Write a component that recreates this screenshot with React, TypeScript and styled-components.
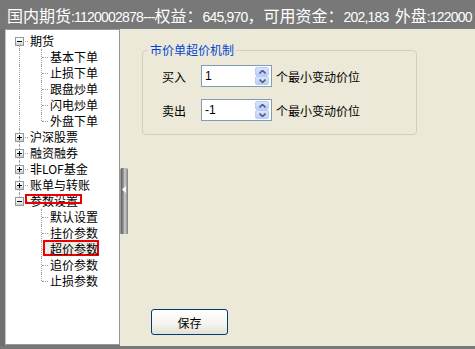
import React from 'react';
import styled, { createGlobalStyle, css } from 'styled-components';

const GlobalStyle = createGlobalStyle`
  html, body {
    margin: 0;
    padding: 0;
  }
  body {
    background: #ece9d8;
    font-family: "Noto Sans CJK SC", "Liberation Sans", sans-serif;
  }
`;

const Window = styled.div`
  width: 475px;
  height: 349px;
  display: flex;
  flex-direction: column;
  overflow: hidden;
  background: #787878;
`;

const TitleBar = styled.div`
  flex: none;
  height: 29px;
  box-sizing: border-box;
  padding: 1px 0 0 7px;
  background: #787878;
  color: #fff;
  font-size: 16px;
  line-height: 28px;
  white-space: nowrap;
  overflow: hidden;
`;

const Num = styled.span`
  font-family: "Liberation Sans", sans-serif;
  font-size: 14px;
  letter-spacing: -0.8px;
`;

const Main = styled.div`
  flex: 1;
  min-height: 0;
  display: flex;
`;

const BottomEdge = styled.div`
  flex: none;
  height: 3px;
  background: #787878;
`;

const LeftEdge = styled.div`
  flex: none;
  width: 5px;
  background: #6f6f6f;
`;

const TreePanel = styled.div`
  flex: none;
  width: 115px;
  box-sizing: border-box;
  margin-bottom: 1px;
  padding-top: 3px;
  background: #fff;
  border: 1px solid #979797;
  border-left-color: #c4c4c4;
`;

const TreeRow = styled.div`
  display: flex;
  align-items: center;
  height: 16px;
`;

const Rail = styled.span<{ $w: number; $x: number; $top?: boolean; $bottom?: boolean; $branch?: boolean }>`
  position: relative;
  flex: none;
  display: flex;
  align-items: center;
  width: ${(p) => p.$w}px;
  height: 16px;

  &::before {
    content: '';
    display: ${(p) => (p.$top || p.$bottom ? 'block' : 'none')};
    position: absolute;
    left: ${(p) => p.$x}px;
    top: ${(p) => (p.$top ? 0 : 8)}px;
    bottom: ${(p) => (p.$bottom ? 0 : 8)}px;
    border-left: 1px dotted #a0a0a0;
  }

  &::after {
    content: '';
    display: ${(p) => (p.$branch ? 'block' : 'none')};
    position: absolute;
    left: ${(p) => p.$x + 1}px;
    right: 2px;
    top: 8px;
    border-top: 1px dotted #a0a0a0;
  }
`;

const Toggle = styled.span<{ $open: boolean }>`
  position: relative;
  z-index: 1;
  width: 9px;
  height: 9px;
  margin-left: 9px;
  box-sizing: border-box;
  border: 1px solid #8c9aa6;
  background: linear-gradient(#ffffff, #f0f0ea 50%, #cfcfc6);

  &::before {
    content: '';
    position: absolute;
    left: 1px;
    top: 3px;
    width: 5px;
    height: 1px;
    background: #000;
  }

  &::after {
    content: '';
    display: ${(p) => (p.$open ? 'none' : 'block')};
    position: absolute;
    left: 3px;
    top: 1px;
    width: 1px;
    height: 5px;
    background: #000;
  }
`;

const NodeLabel = styled.span<{ $mark?: 'outline' | 'selected' }>`
  position: relative;
  z-index: 0;
  font-size: 12px;
  line-height: 16px;
  color: #000;
  white-space: nowrap;

  ${(p) =>
    p.$mark === 'outline' &&
    css`
      &::after {
        content: '';
        position: absolute;
        left: -5px;
        top: 1px;
        width: 57px;
        height: 10px;
        box-sizing: border-box;
        border: 2px solid #ee0000;
      }
    `}

  ${(p) =>
    p.$mark === 'selected' &&
    css`
      &::before {
        content: '';
        position: absolute;
        z-index: -1;
        left: -7px;
        top: -1px;
        width: 56px;
        height: 16px;
        box-sizing: border-box;
        border: 2px solid #ee0000;
        background: #ecebe6;
      }
    `}
`;

const Splitter = styled.div`
  flex: none;
  width: 8px;
  background: #ece9d8;
  display: flex;
  flex-direction: column;
`;

const Grip = styled.div`
  margin-top: 139px;
  height: 66px;
  padding-top: 18px;
  box-sizing: border-box;
  display: flex;
  justify-content: center;
  border-radius: 2px 2px 0 0;
  background: linear-gradient(to right, #e0e0e0 0, #5c5c5c 12%, #9a9a9a 45%, #cfcfcf 60%, #7c7c7c 100%);
`;

const Content = styled.div`
  flex: 1;
  display: flex;
  flex-direction: column;
  align-items: flex-start;
  padding: 13px 0 11px 14px;
  background: #ece9d8;
`;

const GroupBox = styled.fieldset`
  width: 275px;
  box-sizing: border-box;
  min-width: 0;
  margin: 0;
  padding: 0;
  border: 1px solid #d0d0bf;
  border-radius: 4px;
`;

const Legend = styled.legend`
  margin-left: 5px;
  padding: 0 2px;
  font-size: 12px;
  line-height: 16px;
  color: #0046d5;
`;

const FieldRows = styled.div`
  display: flex;
  flex-direction: column;
  gap: 12px;
  padding: 7px 0 13px 19px;
`;

const FieldRow = styled.div`
  display: flex;
  align-items: center;
  height: 22px;
`;

const FieldLabel = styled.span`
  width: 39px;
  font-size: 12px;
  color: #000;
`;

const SpinBox = styled.div`
  width: 71px;
  height: 22px;
  box-sizing: border-box;
  display: flex;
  border: 1px solid #7f9db9;
  background: #fff;
`;

const SpinValue = styled.span`
  flex: 1;
  padding-left: 3px;
  font-family: "Liberation Sans", sans-serif;
  font-size: 12px;
  line-height: 20px;
  color: #000;
`;

const SpinButtons = styled.div`
  width: 14px;
  margin: 1px 2px 1px 0;
  display: flex;
  flex-direction: column;
`;

const SpinButton = styled.span`
  flex: 1;
  display: flex;
  align-items: center;
  justify-content: center;
  border: 1px solid #bccdf5;
  border-radius: 2px;
  background: linear-gradient(#d9e4fd, #bccdf7);
`;

const Unit = styled.span`
  margin-left: 4px;
  font-size: 12px;
  color: #000;
`;

const SaveButton = styled.button`
  margin-top: auto;
  margin-left: 9px;
  width: 77px;
  height: 26px;
  padding: 0;
  border: 1px solid #003c74;
  border-radius: 3px;
  background: linear-gradient(#ffffff, #f4f3ee 60%, #e3e0d6);
  font-family: inherit;
  font-size: 12px;
  color: #000;
`;

const Chevron = ({ up }: { up?: boolean }) => (
  <svg width="7" height="4" viewBox="0 0 7 4">
    <path
      d={up ? 'M0.5 3.5 L3.5 0.5 L6.5 3.5' : 'M0.5 0.5 L3.5 3.5 L6.5 0.5'}
      fill="none"
      stroke="#4d6185"
      strokeWidth="1.6"
    />
  </svg>
);

type Leaf = { label: string; mark?: 'outline' | 'selected' };
type Branch = Leaf & { open?: boolean; children?: Leaf[] };

const tree: Branch[] = [
  {
    label: '期货',
    open: true,
    children: [
      { label: '基本下单' },
      { label: '止损下单' },
      { label: '跟盘炒单' },
      { label: '闪电炒单' },
      { label: '外盘下单' },
    ],
  },
  { label: '沪深股票' },
  { label: '融资融券' },
  { label: '非LOF基金' },
  { label: '账单与转账' },
  {
    label: '参数设置',
    open: true,
    mark: 'outline',
    children: [
      { label: '默认设置' },
      { label: '挂价参数' },
      { label: '超价参数', mark: 'selected' },
      { label: '追价参数' },
      { label: '止损参数' },
    ],
  },
];

const SpinField = ({ label, value }: { label: string; value: string }) => (
  <FieldRow>
    <FieldLabel>{label}</FieldLabel>
    <SpinBox>
      <SpinValue>{value}</SpinValue>
      <SpinButtons>
        <SpinButton>
          <Chevron up />
        </SpinButton>
        <SpinButton>
          <Chevron />
        </SpinButton>
      </SpinButtons>
    </SpinBox>
    <Unit>个最小变动价位</Unit>
  </FieldRow>
);

export default function App() {
  return (
    <Window>
      <GlobalStyle />
      <TitleBar>
        国内期货<Num>:1120002878---</Num>权益：<Num>645,970</Num>，可用资金：
        <Num>202,183 &nbsp;</Num>外盘<Num>:122000</Num>
      </TitleBar>

      <Main>
        <LeftEdge />

        <TreePanel>
          {tree.map((node, i) => {
            const last = i === tree.length - 1;
            return (
              <React.Fragment key={node.label}>
                <TreeRow>
                  <Rail $w={24} $x={13} $top={i > 0} $bottom={!last} $branch>
                    <Toggle $open={!!node.open} />
                  </Rail>
                  <NodeLabel $mark={node.mark}>{node.label}</NodeLabel>
                </TreeRow>

                {node.open &&
                  node.children?.map((child, j) => (
                    <TreeRow key={child.label}>
                      <Rail $w={24} $x={13} $top={!last} $bottom={!last} />
                      <Rail
                        $w={20}
                        $x={11}
                        $top
                        $bottom={j < node.children!.length - 1}
                        $branch
                      />
                      <NodeLabel $mark={child.mark}>{child.label}</NodeLabel>
                    </TreeRow>
                  ))}
              </React.Fragment>
            );
          })}
        </TreePanel>

        <Splitter>
          <Grip>
            <svg width="4" height="7" viewBox="0 0 4 7">
              <polygon points="4,0 0,3.5 4,7" fill="#fff" />
            </svg>
          </Grip>
        </Splitter>

        <Content>
          <GroupBox>
            <Legend>市价单超价机制</Legend>
            <FieldRows>
              <SpinField label="买入" value="1" />
              <SpinField label="卖出" value="-1" />
            </FieldRows>
          </GroupBox>

          <SaveButton>保存</SaveButton>
        </Content>
      </Main>

      <BottomEdge />
    </Window>
  );
}
